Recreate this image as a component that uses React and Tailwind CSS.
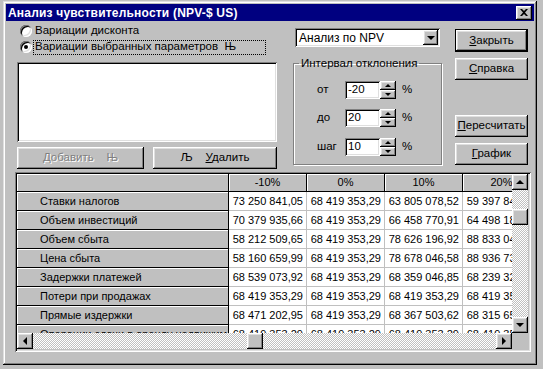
import React from 'react';

const raised = 'shadow-[inset_-1px_-1px_#000,inset_1px_1px_#fff,inset_-2px_-2px_#808080,inset_2px_2px_#dfdfdf]';
const sunken = 'shadow-[inset_1px_1px_#808080,inset_-1px_-1px_#fff,inset_2px_2px_#000,inset_-2px_-2px_#dfdfdf]';
const dither = 'bg-[repeating-conic-gradient(#c0c0c0_0%_25%,#fff_0%_50%)] bg-[length:2px_2px]';

const rows = [
    { name: 'Ставки налогов', values: ['73 250 841,05', '68 419 353,29', '63 805 078,52', '59 397 846,21'] },
    { name: 'Объем инвестиций', values: ['70 379 935,66', '68 419 353,29', '66 458 770,91', '64 498 188,54'] },
    { name: 'Объем сбыта', values: ['58 212 509,65', '68 419 353,29', '78 626 196,92', '88 833 040,55'] },
    { name: 'Цена сбыта', values: ['58 160 659,99', '68 419 353,29', '78 678 046,58', '88 936 739,87'] },
    { name: 'Задержки платежей', values: ['68 539 073,92', '68 419 353,29', '68 359 046,85', '68 239 320,42'] },
    { name: 'Потери при продажах', values: ['68 419 353,29', '68 419 353,29', '68 419 353,29', '68 419 353,29'] },
    { name: 'Прямые издержки', values: ['68 471 202,95', '68 419 353,29', '68 367 503,62', '68 315 654,28'] },
    { name: 'Операции сдачи в аренду недвижимости', values: ['68 419 353,29', '68 419 353,29', '68 419 353,29', '68 419 353,29'] },
];

const columns = ['-10%', '0%', '10%', '20%'];

// small black triangles for scroll / spin buttons
const Arrow = ({ dir, size = 4 }) => {
    const s = size;
    const points = {
        up: `0,${s} ${s},0 ${s * 2},${s}`,
        down: `0,0 ${s * 2},0 ${s},${s}`,
        left: `${s},0 ${s},${s * 2} 0,${s}`,
        right: `0,0 0,${s * 2} ${s},${s}`,
    }[dir];
    const w = dir === 'up' || dir === 'down' ? s * 2 : s;
    const h = dir === 'up' || dir === 'down' ? s : s * 2;
    return (
        <svg width={w} height={h} viewBox={`0 0 ${w} ${h}`}>
            <polygon points={points} fill="#000" />
        </svg>
    );
};

const Button = ({ children, className = '', disabled }) => (
    <div
        className={`flex items-center justify-center bg-[#c0c0c0] text-[11.5px] ${raised} ${disabled ? 'text-[#808080] [text-shadow:1px_1px_0_#fff]' : ''} ${className}`}
    >
        {children}
    </div>
);

const Radio = ({ checked }) => (
    <div className="w-3 h-3 rounded-full bg-white flex items-center justify-center shadow-[inset_1px_1px_#808080,inset_-1px_-1px_#fff,inset_2px_2px_#000,inset_-2px_-2px_#dfdfdf]">
        {checked && <div className="w-1 h-1 rounded-full bg-black" />}
    </div>
);

const Spin = ({ label, value }) => (
    <div className="flex items-center h-[18px] text-[11.5px]">
        <div className="w-[28px] ml-[23px]">{label}</div>
        <div className={`w-[35px] h-[18px] bg-white ${sunken} flex items-center pl-[3px]`}>{value}</div>
        <div className="w-[16px] h-[18px] flex flex-col">
            <div className={`h-[9px] bg-[#c0c0c0] ${raised} flex items-center justify-center`}><Arrow dir="up" size={3} /></div>
            <div className={`h-[9px] bg-[#c0c0c0] ${raised} flex items-center justify-center`}><Arrow dir="down" size={3} /></div>
        </div>
        <div className="ml-[6px]">%</div>
    </div>
);

const App = () => {
    return (
        <div className="w-[543px] h-[369px] bg-[#c0c0c0] overflow-hidden pt-[1px] pl-[3px] font-['Liberation_Sans',Arial,sans-serif] text-[11px] text-black leading-none">
            <div className="w-[534px] h-[364px] bg-[#c0c0c0] p-[3px] shadow-[inset_-1px_-1px_#000,inset_1px_1px_#dfdfdf,inset_-2px_-2px_#808080,inset_2px_2px_#fff] flex flex-col">
                {/* Title bar */}
                <div className="h-[17px] bg-[#000080] flex items-center justify-between pl-[2px] pr-[2px]">
                    <span className="text-white font-bold text-[12px] tracking-[0.2px]">Анализ чувствительности (NPV-$ US)</span>
                    <div className={`w-[16px] h-[14px] bg-[#c0c0c0] ${raised} flex items-center justify-center`}>
                        <svg width="8" height="7" viewBox="0 0 8 7">
                            <path d="M0 0h2l2 2 2-2h2L5 3.5 8 7H6L4 5 2 7H0l3-3.5z" fill="#000" />
                        </svg>
                    </div>
                </div>

                {/* Top controls */}
                <div className="h-[151px] flex items-start">
                    {/* Left column */}
                    <div className="w-[260px] ml-[11px] pt-[2px] flex flex-col text-[11.5px]">
                        <div className="h-[16px] flex items-center pl-[3px]">
                            <Radio />
                            <span className="ml-[2px] px-[1px]">Вариации дисконта</span>
                        </div>
                        <div className="h-[16px] flex items-center pl-[3px]">
                            <Radio checked />
                            <span className="ml-[1px] w-[233px] h-[15px] flex items-center px-[1px] border border-dotted border-black">Вариации выбранных параметров&nbsp;&nbsp;Њ</span>
                        </div>
                        <div className={`mt-[7px] h-[80px] bg-white ${sunken}`} />
                        <div className="mt-[5px] flex gap-[9px]">
                            <Button disabled className="w-[127px] h-[22px]">
                                <span><u>Д</u>обавить&nbsp;&nbsp;&nbsp;&nbsp;Њ</span>
                            </Button>
                            <Button className="w-[124px] h-[22px]">
                                <span>Љ&nbsp;&nbsp;&nbsp;&nbsp;<u>У</u>далить</span>
                            </Button>
                        </div>
                    </div>

                    {/* Middle column */}
                    <div className="w-[149px] ml-[16px] flex flex-col">
                        <div className={`mt-[7px] ml-[2px] w-[145px] h-[19px] bg-white ${sunken} flex items-center justify-between pl-[4px] pr-[2px]`}>
                            <span className="text-[12px]">Анализ по NPV</span>
                            <div className={`w-[15px] h-[15px] bg-[#c0c0c0] ${raised} flex items-center justify-center`}>
                                <Arrow dir="down" size={4} />
                            </div>
                        </div>
                        <fieldset className="mt-[10px] h-[108px] border border-[#808080] shadow-[inset_1px_1px_#fff,1px_1px_#fff] flex flex-col">
                            <legend className="ml-[5px] px-[2px] text-[11.5px] leading-[13px]">Интервал отклонения</legend>
                            <div className="pt-[11px] flex flex-col gap-[10px]">
                                <Spin label="от" value="-20" />
                                <Spin label="до" value="20" />
                                <div className="mt-[1px]"><Spin label="шаг" value="10" /></div>
                            </div>
                        </fieldset>
                    </div>

                    {/* Right column */}
                    <div className="w-[73px] ml-[13px] flex flex-col">
                        <div className="mt-[8px] h-[23px] border border-black">
                            <Button className="h-full">
                                <span><u>З</u>акрыть</span>
                            </Button>
                        </div>
                        <Button className="mt-[6px] h-[22px]">
                            <span><u>С</u>правка</span>
                        </Button>
                        <Button className="mt-[35px] h-[22px]">
                            <span><u>П</u>ересчитать</span>
                        </Button>
                        <Button className="mt-[6px] h-[22px]">
                            <span><u>Г</u>рафик</span>
                        </Button>
                    </div>
                </div>

                {/* Grid */}
                <div className={`ml-[9px] w-[516px] h-[180px] p-[2px] ${sunken} bg-[#c0c0c0]`}>
                    <div className="flex h-[159px]">
                        <div className="w-[495px] overflow-hidden">
                            <div className="flex h-[18px] w-max">
                                <div className="w-[212px] bg-[#c0c0c0] border-r border-b border-black shadow-[inset_1px_1px_#fff]" />
                                {columns.map((c) => (
                                    <div key={c} className="w-[78px] bg-[#c0c0c0] border-r border-b border-black shadow-[inset_1px_1px_#fff] flex items-center justify-center">
                                        {c}
                                    </div>
                                ))}
                            </div>
                            {rows.map((r) => (
                                <div key={r.name} className="flex h-[19px] w-max">
                                    <div className="w-[212px] bg-[#c0c0c0] border-r border-b border-black shadow-[inset_1px_1px_#fff] flex items-center pl-[23px] whitespace-nowrap overflow-hidden">
                                        {r.name}
                                    </div>
                                    {r.values.map((v, i) => (
                                        <div key={i} className="w-[78px] bg-white border-r border-b border-[#c0c0c0] flex items-center justify-end pr-[3px] whitespace-nowrap">
                                            {v}
                                        </div>
                                    ))}
                                </div>
                            ))}
                        </div>
                        {/* vertical scrollbar */}
                        <div className={`w-[16px] flex flex-col ${dither}`}>
                            <div className={`h-[16px] bg-[#c0c0c0] ${raised} flex items-center justify-center`}><Arrow dir="up" /></div>
                            <div className={`mt-[19px] h-[16px] bg-[#c0c0c0] ${raised}`} />
                            <div className={`mt-auto h-[16px] bg-[#c0c0c0] ${raised} flex items-center justify-center`}><Arrow dir="down" /></div>
                        </div>
                    </div>
                    <div className="flex h-[16px]">
                        <div className={`w-[495px] flex ${dither}`}>
                            <div className={`w-[16px] bg-[#c0c0c0] ${raised} flex items-center justify-center`}><Arrow dir="left" /></div>
                            <div className={`ml-[214px] w-[16px] bg-[#c0c0c0] ${raised}`} />
                            <div className={`ml-auto w-[16px] bg-[#c0c0c0] ${raised} flex items-center justify-center`}><Arrow dir="right" /></div>
                        </div>
                        <div className="w-[17px] bg-[#c0c0c0]" />
                    </div>
                </div>
            </div>
        </div>
    );
};

export default App;
